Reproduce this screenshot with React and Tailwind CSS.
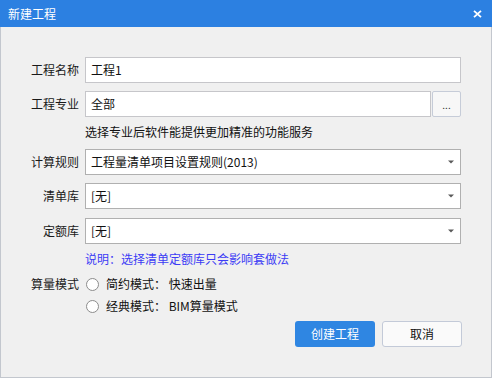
import React from 'react'

const font = "font-['Microsoft_YaHei','Noto_Sans_CJK_SC',sans-serif]"

function Caret() {
  return (
    <svg width="6" height="4" viewBox="0 0 6 4" className="shrink-0">
      <path d="M0 0.5 H6 L3 3.5 Z" fill="#5a5a5a" />
    </svg>
  )
}

function Label({ children }) {
  return <div className="w-[78px] shrink-0 text-right text-[12px] leading-[16px] text-[#1a1a1a]">{children}</div>
}

function Select({ value }) {
  return (
    <div className="ml-[6px] flex h-[26px] w-[376px] items-center justify-between border border-[#b0b0b0] bg-white pl-[5px] pr-[6px]">
      <span className="text-[12px] leading-[16px] text-[#111]">{value}</span>
      <Caret />
    </div>
  )
}

function Radio({ children }) {
  return (
    <div className="flex h-[22px] items-center">
      <div className="ml-[1px] h-[13px] w-[13px] rounded-full border border-[#8c8c8c] bg-white" />
      <span className="ml-[7px] text-[12px] leading-[16px] text-[#111]">{children}</span>
    </div>
  )
}

export default function App() {
  return (
    <div className={`flex h-[378px] w-[492px] flex-col ${font}`}>
      <div className="flex h-[27px] shrink-0 items-center justify-between bg-[#2c80e1] pl-[8px] pr-[10px]">
        <span className="text-[12px] leading-[16px] text-white">新建工程</span>
        <svg width="9" height="8" viewBox="0 0 9 8">
          <path d="M1 0.8 L8 7.2 M8 0.8 L1 7.2" stroke="white" strokeWidth="1.8" />
        </svg>
      </div>

      <div className="flex flex-1 flex-col border-x border-b border-[#c3c7ce] bg-[#f0f0f0] pt-[30px]">
        <div className="flex items-center">
          <Label>工程名称</Label>
          <div className="ml-[6px] flex h-[26px] w-[376px] items-center border border-[#c6c6ca] bg-white pl-[5px]">
            <span className="text-[12px] leading-[16px] text-[#111]">工程1</span>
          </div>
        </div>

        <div className="mt-[8px] flex items-center">
          <Label>工程专业</Label>
          <div className="ml-[6px] flex w-[376px]">
            <div className="flex h-[26px] flex-1 items-center border border-[#c6c6ca] bg-white pl-[5px]">
              <span className="text-[12px] leading-[16px] text-[#111]">全部</span>
            </div>
            <div className="ml-[1px] flex h-[26px] w-[29px] items-end justify-center rounded-[2px] border border-[#c6ccd8] bg-[#f7f7f7] pb-[6px]">
              <span className="text-[10px] leading-[10px] text-[#333]">...</span>
            </div>
          </div>
        </div>

        <div className="flex h-[32px] items-center pb-[3px] pl-[84px]">
          <span className="text-[12px] leading-[16px] text-[#111]">选择专业后软件能提供更加精准的功能服务</span>
        </div>

        <div className="flex items-center">
          <Label>计算规则</Label>
          <Select value="工程量清单项目设置规则(2013)" />
        </div>

        <div className="mt-[8px] flex items-center">
          <Label>清单库</Label>
          <Select value="[无]" />
        </div>

        <div className="mt-[9px] flex items-center">
          <Label>定额库</Label>
          <Select value="[无]" />
        </div>

        <div className="flex h-[29px] items-center pl-[84px]">
          <span className="text-[12px] leading-[16px] text-[#3c3cf5]">说明：选择清单定额库只会影响套做法</span>
        </div>

        <div className="flex items-start">
          <div className="flex h-[22px] items-center">
            <Label>算量模式</Label>
          </div>
          <div className="ml-[6px] flex flex-col">
            <Radio>简约模式： 快速出量</Radio>
            <Radio>经典模式： BIM算量模式</Radio>
          </div>
        </div>

        <div className="mt-[4px] flex justify-end gap-[7px] pr-[29px]">
          <div className="flex h-[26px] w-[80px] items-center justify-center rounded-[3px] bg-[#2f86e2]">
            <span className="text-[12px] leading-[16px] text-white">创建工程</span>
          </div>
          <div className="flex h-[26px] w-[80px] items-center justify-center rounded-[3px] border border-[#c3cad8] bg-[#fafafa]">
            <span className="text-[12px] leading-[16px] text-[#111]">取消</span>
          </div>
        </div>
      </div>
    </div>
  )
}
